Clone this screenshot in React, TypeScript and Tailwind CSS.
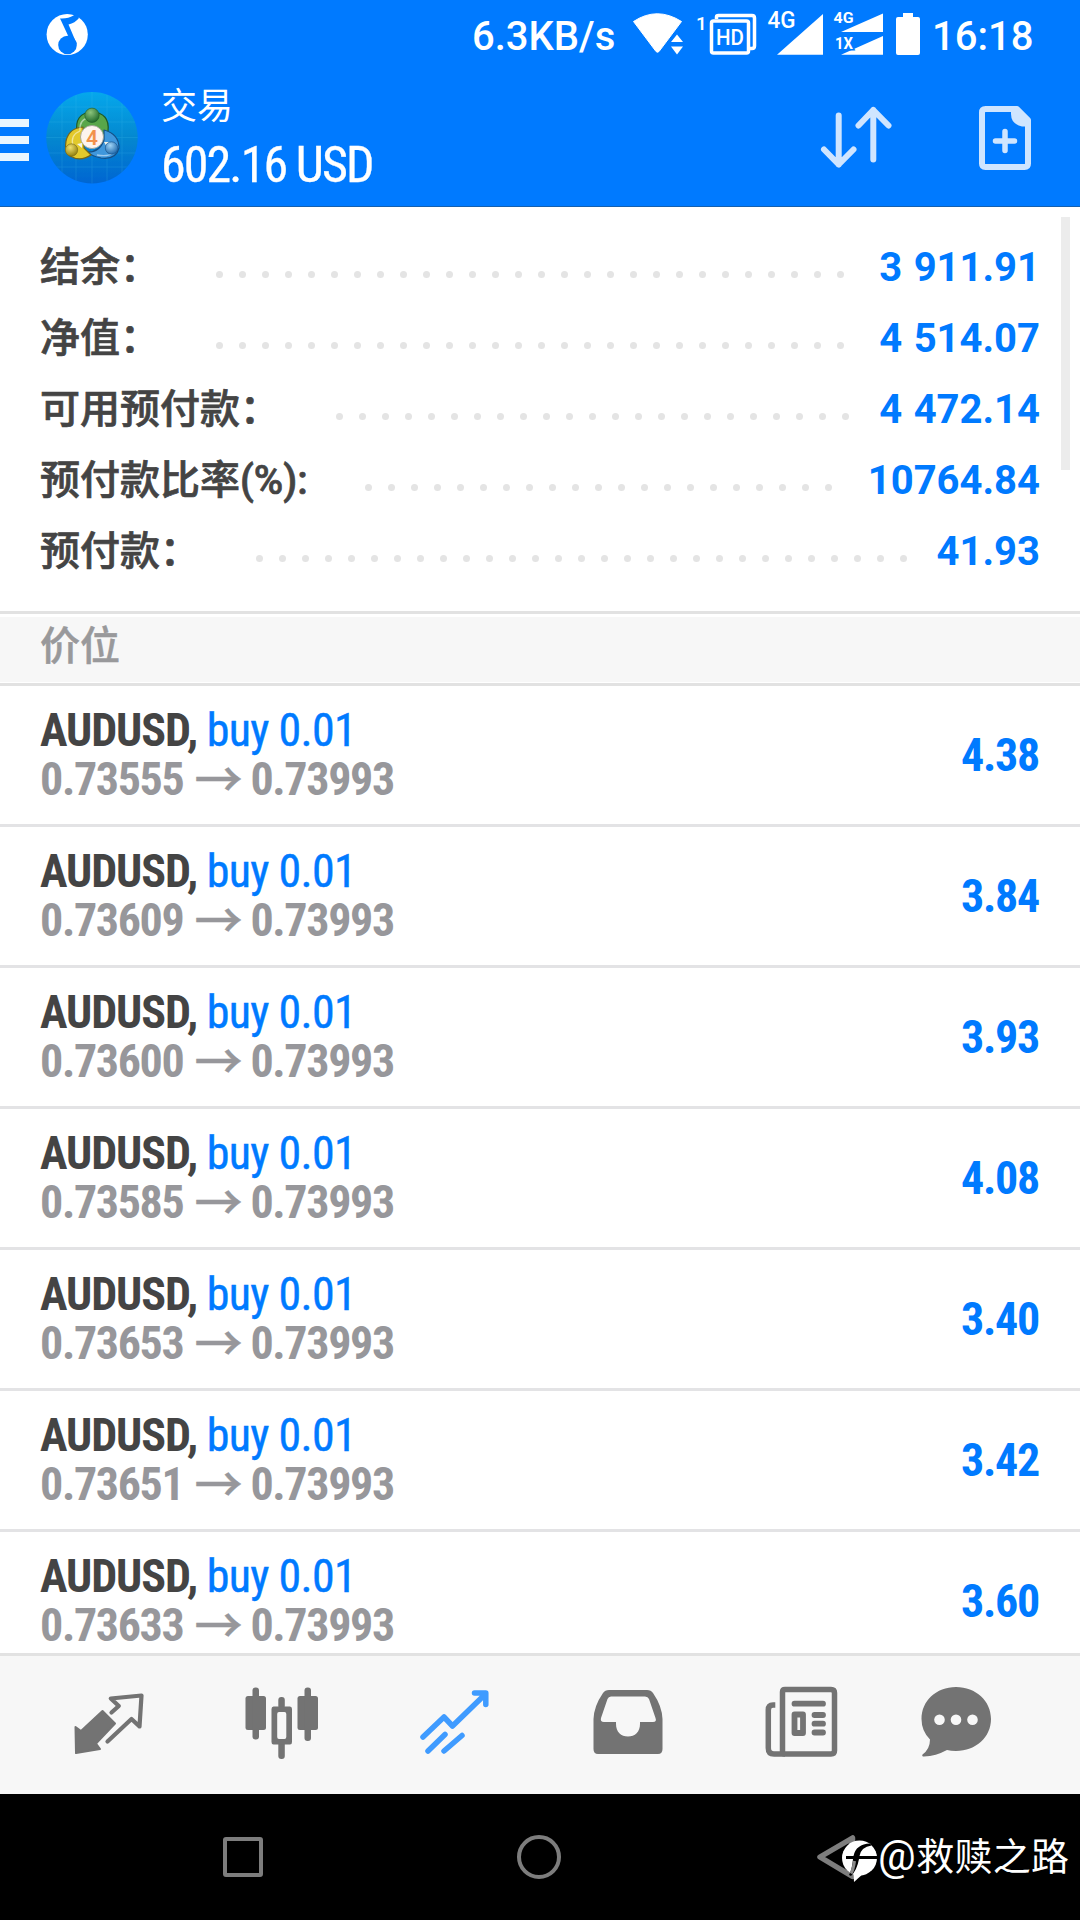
import React from "react";

const summary = [
  { label: "结余：", labelClass: "w-[176px]", dots: 28, value: "3 911.91" },
  { label: "净值：", labelClass: "w-[176px]", dots: 28, value: "4 514.07" },
  { label: "可用预付款：", labelClass: "w-[296px]", dots: 23, value: "4 472.14" },
  { label: "预付款比率(%):", labelClass: "w-[325px]", dots: 21, value: "10764.84" },
  { label: "预付款：", labelClass: "w-[216px]", dots: 29, value: "41.93" },
];

const positions = [
  { open: "0.73555", profit: "4.38" },
  { open: "0.73609", profit: "3.84" },
  { open: "0.73600", profit: "3.93" },
  { open: "0.73585", profit: "4.08" },
  { open: "0.73653", profit: "3.40" },
  { open: "0.73651", profit: "3.42" },
  { open: "0.73633", profit: "3.60" },
];

function MusicIcon() {
  return (
    <svg className="ml-[46px] mt-[13px] h-[43px] w-[43px]" viewBox="46 13 43 43">
      <circle cx="67.200" cy="34.500" r="20.600" fill="#fff" />
      <g fill="#007aff">
        <circle cx="67.500" cy="45" r="9.300" />
        <path d="M60 18.500Q68 19 73.500 15.500L76.500 12L79 18Q75 23 68.500 24.500L76.800 44L71 42L61 20.500Z" />
      </g>
    </svg>
  );
}

function StatusIcons() {
  return (
    <svg className="h-[72px] w-[290px]" viewBox="630 0 290 72" fill="#fff" fontFamily="Roboto, sans-serif" fontWeight="500">
      <path d="M633.500 21.500Q657 6 681.500 21.500L659 51.500Q657.500 53 656 51.500Z" stroke="#fff" strokeWidth="1" strokeLinejoin="round" />
      <path d="M669 41.500L677 31.500L685 41.500V57H669Z" fill="#007aff" />
      <path d="M671 42L677 34.500L683 42ZM671 46.500H683L677 54.500Z" />
      <text x="696" y="29.500" fontSize="19">1</text>
      <path d="M716.500 19V17Q716.500 15.500 718.500 15.500H752Q754.500 15.500 754.500 18V46Q754.500 48.500 752 48.500H750" fill="none" stroke="#fff" strokeWidth="3.500" />
      <rect x="711.5" y="21" width="37" height="32" rx="2" fill="#007aff" stroke="#fff" strokeWidth="3.5" />
      <text x="716" y="45" fontSize="22" textLength="28" lengthAdjust="spacingAndGlyphs">HD</text>
      <text x="767.5" y="28" fontSize="23" textLength="28" lengthAdjust="spacingAndGlyphs">4G</text>
      <path d="M777 54.700L823 14V54.700Z" />
      <path d="M841 32L883 13.500V32ZM841 54.700L883 36V54.700Z" />
      <text x="833.5" y="22.500" fontSize="15.500" textLength="20" lengthAdjust="spacingAndGlyphs" fontWeight="700">4G</text>
      <text x="835" y="49" fontSize="16" textLength="18" lengthAdjust="spacingAndGlyphs" fontWeight="700" stroke="#007aff" strokeWidth="3" paintOrder="stroke">1X</text>
      <path d="M903 13H913V17H918Q920 17 920 19V53Q920 55 918 55H898Q896 55 896 53V19Q896 17 898 17H903Z" />
    </svg>
  );
}

function AppLogo() {
  return (
    <svg className="h-[92px] w-[92px]" viewBox="46 92 92 92">
      <defs>
        <linearGradient id="disc" x1="0" y1="0" x2="0" y2="1">
          <stop offset="0" stopColor="#06a8ec" />
          <stop offset="0.5" stopColor="#0588cf" />
          <stop offset="1" stopColor="#0066d2" />
        </linearGradient>
        <radialGradient id="greenBall" cx="0.4" cy="0.3" r="0.7">
          <stop offset="0" stopColor="#8cc47c" />
          <stop offset="1" stopColor="#226b2c" />
        </radialGradient>
        <radialGradient id="yellowBall" cx="0.4" cy="0.3" r="0.7">
          <stop offset="0" stopColor="#f0e070" />
          <stop offset="1" stopColor="#94820f" />
        </radialGradient>
        <radialGradient id="blueBall" cx="0.4" cy="0.3" r="0.7">
          <stop offset="0" stopColor="#a0d4f6" />
          <stop offset="1" stopColor="#236cae" />
        </radialGradient>
        <clipPath id="discClip"><circle cx="92" cy="137.700" r="45.700" /></clipPath>
      </defs>
      <circle cx="92" cy="137.700" r="45.700" fill="url(#disc)" />
      <path clipPath="url(#discClip)" d="M46 107H138M46 122H138M46 137.500H138M46 153H138M46 167H138M62 92V184M76 92V184M92 92V184M107 92V184M122 92V184" stroke="#4cc4ee" strokeWidth="0.700" opacity="0.250" />
      <g strokeWidth="1.200" strokeLinejoin="round">
        <path d="M77 133Q74 113 92 112Q110 113 108 131Q107 138 101 137L83 133Z" fill="#58a64a" stroke="#1f5a26" />
        <path d="M104 130Q119 134 119 148Q116 160 101 158Q91 156 88 152Q100 152 104 140Z" fill="#3f97dc" stroke="#144f86" />
        <path d="M83 127Q69 128 66 141Q64 152 70 156Q80 162 91 155L84 148Z" fill="#e2c92c" stroke="#75651a" />
        <path d="M80 131Q79 119 89 118M73 146Q70 135 80 131M97 155Q108 157 113 153" fill="none" stroke="#fff" strokeWidth="1.300" opacity="0.500" />
        <path d="M104 142H111L107 147ZM77 144L82 143V148Z" fill="#f5f5ea" stroke="none" />
      </g>
      <circle cx="92" cy="115.300" r="7.200" fill="url(#greenBall)" stroke="#1f5a26" strokeWidth="0.600" />
      <circle cx="71.500" cy="150" r="6.200" fill="url(#yellowBall)" stroke="#75651a" strokeWidth="0.600" />
      <circle cx="111.500" cy="148" r="6.200" fill="url(#blueBall)" stroke="#144f86" strokeWidth="0.600" />
      <circle cx="92" cy="137" r="11.500" fill="#fdf4ef" stroke="#9a9c92" strokeWidth="0.800" />
      <text x="92" y="144.500" textAnchor="middle" fontFamily="Roboto, sans-serif" fontWeight="600" fontSize="21" fill="#f2924c">4</text>
    </svg>
  );
}

function SortIcon() {
  return (
    <svg className="h-[66px] w-[72px]" viewBox="820 105 72 66" fill="none" stroke="#cfe5ff" strokeWidth="6" strokeLinecap="round" strokeLinejoin="round">
      <path d="M838.700 115.500V164.500M824 149.500L838.700 164.500L853.500 149.500M873.300 159.500V110M858.500 125.500L873.300 110L888.500 125.500" />
    </svg>
  );
}

function NewOrderIcon() {
  return (
    <svg className="h-[66px] w-[56px]" viewBox="977 105 56 66" fill="none" stroke="#cfe5ff" strokeWidth="6" strokeLinejoin="round">
      <path d="M1017 109H985.500Q982 109 982 112.500V163.500Q982 167 985.500 167H1024.500Q1028 167 1028 163.500V120Z" />
      <path d="M1011 108H1018L1030 120V126.500H1022Q1011 124 1011 114Z" fill="#cfe5ff" stroke="none" />
      <path d="M995.500 141H1014.500M1005 131.500V150.500" strokeWidth="5.500" strokeLinecap="round" />
    </svg>
  );
}

function Header() {
  return (
    <header className="flex h-[207px] shrink-0 flex-col border-b border-[#1560ae] bg-[#007aff] text-white">
      <div className="flex h-[72px] items-start">
        <MusicIcon />
        <span className="ml-[383px] text-[40px] leading-[74px] font-medium">6.3KB/s</span>
        <div className="ml-auto flex">
          <StatusIcons />
          <span className="w-[160px] pl-[12px] text-[40px] leading-[74px] font-medium">16:18</span>
        </div>
      </div>
      <div className="flex h-[134px] items-start">
        <div className="mt-[47px] flex w-[29px] flex-col gap-[9px]">
          <div className="h-[8px] bg-[#e9f6ff]" />
          <div className="h-[8px] bg-[#e9f6ff]" />
          <div className="h-[8px] bg-[#e9f6ff]" />
        </div>
        <div className="mt-[20px] ml-[17px]"><AppLogo /></div>
        <div className="ml-[23px] flex flex-col">
          <span className="mt-[9px] font-['Noto_Sans_CJK_SC',sans-serif] text-[36px] leading-[44px] font-normal">交易</span>
          <span className="mt-[12px] font-['Roboto_Condensed',Roboto,sans-serif] text-[50px] leading-[56px] tracking-[-1.9px] whitespace-nowrap [-webkit-text-stroke:0.3px_#fff] [font-stretch:75%]">602.16 USD</span>
        </div>
        <div className="mt-[33px] mr-[47px] ml-auto flex gap-[85px]">
          <SortIcon />
          <NewOrderIcon />
        </div>
      </div>
    </header>
  );
}

function Summary() {
  return (
    <section className="flex h-[404px] shrink-0 justify-between">
      <div className="mt-[24px] flex w-[1040px] flex-col pl-[40px]">
        {summary.map((row) => (
          <div key={row.label} className="flex h-[71px] items-center">
            <span className={"shrink-0 pt-[2px] font-[Roboto,'Noto_Sans_CJK_SC',sans-serif] text-[40px] leading-[60px] font-medium whitespace-nowrap text-[#444] [-webkit-text-stroke:0.7px_#444] " + row.labelClass}>{row.label}</span>
            <div className="mt-[15px] flex gap-4">
              {Array.from({ length: row.dots }, (_, i) => (
                <i key={i} className="size-[7px] shrink-0 rounded-full bg-[#e4e4e4]" />
              ))}
            </div>
            <span className="ml-auto pt-[2px] text-[40px] leading-[60px] font-bold whitespace-nowrap text-[#007aff] [word-spacing:1.5px]">{row.value}</span>
          </div>
        ))}
      </div>
      <div className="mt-[10px] mr-[10px] h-[253px] w-[9px] bg-[#ececec]" />
    </section>
  );
}

function PositionRow({ open, profit }: { open: string; profit: string }) {
  return (
    <div className="flex h-[141px] shrink-0 justify-between border-b-[3px] border-[#e3e3e5] pr-[41px] pl-[40px] font-['Roboto_Condensed',Roboto,sans-serif] text-[46px] leading-[49px] whitespace-nowrap [font-stretch:75%]">
      <div className="mt-[20px] flex flex-col">
        <div className="flex h-[49px] items-center gap-[9.5px]">
          <span className="font-bold tracking-[-1.1px] text-[#444]">AUDUSD,</span>
          <span className="tracking-[-0.7px] text-[#007aff] [-webkit-text-stroke:0.4px_#007aff]">buy 0.01</span>
        </div>
        <div className="flex h-[49px] items-center font-bold tracking-[-1.35px] text-[#97979b]">
          <span>{open}</span>
          <span className="mr-[8px] ml-[11px] pb-[6px] font-['Noto_Sans_CJK_SC',sans-serif] text-[48px] leading-[49px] font-medium tracking-normal [-webkit-text-stroke:0.4px_#97979b]">→</span>
          <span>0.73993</span>
        </div>
      </div>
      <span className="self-center font-bold tracking-[-1.3px] text-[#007aff]">{profit}</span>
    </div>
  );
}

function TabBar() {
  return (
    <nav className="grid h-[141px] shrink-0 grid-cols-6 border-t-[3px] border-[#e2e2e2] bg-[#f7f7f7] text-[#737373]">
      <svg className="h-[138px] w-[180px]" viewBox="0 16 180 138">
        <path d="M75.500 87L81 91L102.500 71L115 83.500L96 103.500L100 109L76 113Z" fill="currentColor" stroke="currentColor" strokeWidth="2" strokeLinejoin="round" />
        <path d="M111.500 72.500L118.800 66L110.800 58.500L141.500 55.500L139.500 86.500L131.500 79L107.500 101.500" fill="none" stroke="currentColor" strokeWidth="4.200" strokeLinejoin="round" strokeLinecap="round" />
      </svg>
      <svg className="h-[138px] w-[180px]" viewBox="180 16 180 138" fill="currentColor">
        <rect x="245.500" y="56" width="20.500" height="34" rx="2.500" />
        <rect x="252.500" y="47.500" width="6.500" height="52" rx="3" />
        <rect x="297.500" y="56" width="20.500" height="34" rx="2.500" />
        <rect x="304.500" y="47.500" width="6.500" height="53.500" rx="3" />
        <rect x="278.300" y="57" width="6.500" height="12" rx="3" />
        <rect x="278.300" y="100" width="6.500" height="19" rx="3" />
        <path fillRule="evenodd" d="M273.500 66.500H290Q292 66.500 292 69V102Q292 104.500 290 104.500H273.500Q271.500 104.500 271.500 102V69Q271.500 66.500 273.500 66.500ZM279 72Q277.200 72 277.200 74V97Q277.200 99 279 99H284.500Q286.300 99 286.300 97V74Q286.300 72 284.500 72Z" />
      </svg>
      <svg className="h-[138px] w-[180px]" viewBox="360 16 180 138" fill="none" stroke="#3f9bff" strokeWidth="5.500" strokeLinecap="round" strokeLinejoin="round">
        <path d="M423 97L444 77L452.500 86L485.500 54M474.500 53H485.800V64.500M445 94.500L428 111M462 95.500L444 111" />
      </svg>
      <svg className="h-[138px] w-[180px]" viewBox="540 16 180 138" fill="currentColor">
        <path fillRule="evenodd" d="M609 50H647Q651 50 653 53Q662 66 662.500 79V109Q662.500 114 658 114H598Q593.500 114 593.500 109V79Q594 66 603 53Q605 50 609 50ZM611 56.500Q608.500 56.500 607.500 59L601 78Q600 82 604 82H616V84C616 92 621 96.500 628 96.500S640 92 640 84V82H653Q657 82 655.500 78L649 59Q648 56.500 645 56.500Z" />
      </svg>
      <svg className="h-[138px] w-[180px]" viewBox="720 16 180 138" fill="none" stroke="currentColor">
        <path d="M785 49.500H831Q834.500 49.500 834.500 53V110.500Q834.500 114 831 114H785Q782.500 114 782.500 111.500V52Q782.500 49.500 785 49.500Z" strokeWidth="5.500" />
        <path d="M775.300 65H773Q768.300 65 768.300 70V108Q768.300 114 774 114H785" strokeWidth="5.500" />
        <path d="M794.500 63.700H823M814.500 75H823M814.500 83.700H823M814.500 92.500H823" strokeWidth="5.800" strokeLinecap="round" />
        <path d="M794.500 74.500H803V93H794.500Z" strokeWidth="5.800" strokeLinejoin="round" />
      </svg>
      <svg className="h-[138px] w-[180px]" viewBox="900 16 180 138" fill="currentColor">
        <path d="M956 47C976 47 991 61 991 79S976 111 956 111Q951 111 947 110Q936 116 924 116.500Q921.500 116.500 922.500 114.500Q930 109 930 99.500Q921.500 91 921.500 79C921.500 61 936 47 956 47Z" />
        <g fill="#f7f7f7">
          <circle cx="939.500" cy="79.800" r="5.300" />
          <circle cx="956" cy="79.800" r="5.300" />
          <circle cx="972.500" cy="79.800" r="5.300" />
        </g>
      </svg>
    </nav>
  );
}

function SystemNav() {
  return (
    <footer className="flex h-[126px] shrink-0 items-center bg-black text-white">
      <div className="ml-[223px] size-[40px] rounded-[3px] border-4 border-[#7d7d7d]" />
      <div className="ml-[254px] size-[44px] rounded-full border-4 border-[#7d7d7d]" />
      <svg className="ml-[254px] h-[50px] w-[64px]" viewBox="815 1832 64 50">
        <path d="M820 1857L852.500 1838V1876.500Z" fill="none" stroke="#7d7d7d" strokeWidth="5.500" strokeLinejoin="round" />
        <circle cx="859.500" cy="1858" r="17.500" fill="#fff" />
        <path d="M853.500 1872L854 1882L864 1873Z" fill="#fff" />
        <path d="M849 1875Q852 1870 853 1859H846V1856H853.500Q856 1844 870 1843.500L871.500 1845.500Q861 1847 859.500 1856H878V1859H859Q857 1870 851 1876Z" fill="#000" />
        <path d="M851 1873.500Q853.500 1869 854.500 1861" fill="none" stroke="#8a8a8a" strokeWidth="3" />
      </svg>
      <span className="-ml-px pb-[5px] font-['Noto_Sans_CJK_SC',sans-serif] text-[38px] leading-[56px] font-normal tracking-[0.3px] whitespace-nowrap"><span className="font-[Roboto,sans-serif] text-[42px] leading-[56px] tracking-[0.5px]">@</span>救赎之路</span>
    </footer>
  );
}

export default function App() {
  return (
    <div className="flex h-[1920px] w-[1080px] flex-col overflow-hidden bg-white font-[Roboto,sans-serif]">
      <Header />
      <Summary />
      <div className="flex h-[75px] shrink-0 flex-col border-y-[3px] border-[#e2e2e2] pt-[3px] pb-px">
        <h2 className="h-full bg-[#f7f7f7] pl-[40px] font-['Noto_Sans_CJK_SC',sans-serif] text-[40px] leading-[52px] font-medium text-[#99999b] [-webkit-text-stroke:0.5px_#99999b]">价位</h2>
      </div>
      <main className="flex h-[967px] shrink-0 flex-col overflow-hidden">
        {positions.map((p) => <PositionRow key={p.open} {...p} />)}
      </main>
      <TabBar />
      <SystemNav />
    </div>
  );
}
